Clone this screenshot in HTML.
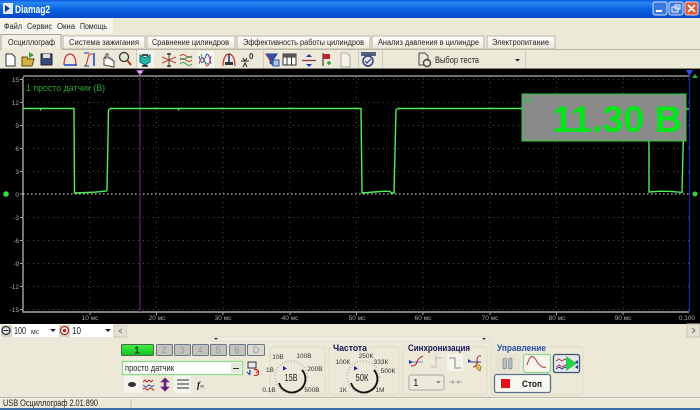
<!DOCTYPE html>
<html><head><meta charset="utf-8"><style>
html,body{margin:0;padding:0;width:700px;height:410px;overflow:hidden;background:#ece9d8}
svg{display:block;filter:blur(.35px)}
text{font-family:"Liberation Sans",sans-serif}
.t{font-size:8px;fill:#222}
.y{font-size:6.500px;fill:#aaa;text-anchor:end}
.x{font-size:6.500px;fill:#aaa;text-anchor:middle}
.k{font-size:6.500px;fill:#333;text-anchor:middle}
.b{font-size:9px;font-weight:bold}
.n{font-size:9px;fill:#999;text-anchor:middle}
</style></head><body>
<svg width="700" height="410" viewBox="0 0 700 410" xmlns="http://www.w3.org/2000/svg">
<defs>
<linearGradient id="tb" x1="0" y1="0" x2="0" y2="1"><stop offset="0" stop-color="#0a5ae0"/><stop offset=".15" stop-color="#2a86f0"/><stop offset=".5" stop-color="#0a62e4"/><stop offset="1" stop-color="#0448c8"/></linearGradient>
<linearGradient id="gr" x1="0" y1="0" x2="0" y2="1"><stop offset="0" stop-color="#44f044"/><stop offset="1" stop-color="#10c020"/></linearGradient>
<linearGradient id="tab" x1="0" y1="0" x2="0" y2="1"><stop offset="0" stop-color="#fff"/><stop offset="1" stop-color="#ebe8da"/></linearGradient>
</defs>
<rect width="700" height="410" fill="#ece9d8"/>
<!-- title bar -->
<rect width="700" height="18" fill="url(#tb)"/>
<rect x="3" y="3" width="10" height="11" fill="#dfe8f5"/><path d="M5 5l5 3.500-5 3.500z" fill="#123a8a"/>
<text x="15" y="13" font-size="11" font-weight="bold" fill="#fff" textLength="35" lengthAdjust="spacingAndGlyphs">Diamag2</text>
<rect x="653" y="2" width="14" height="13" rx="2" fill="#3c78e0" stroke="#cfe0f8"/><rect x="656" y="10" width="6" height="2" fill="#fff"/>
<rect x="669" y="2" width="14" height="13" rx="2" fill="#3c78e0" stroke="#cfe0f8"/><rect x="672" y="7" width="6" height="5" fill="none" stroke="#fff"/><rect x="675" y="5" width="5" height="4" fill="none" stroke="#fff"/>
<rect x="685" y="2" width="13" height="13" rx="2" fill="#e0583a" stroke="#f4d0c4"/><path d="M688 5l7 7M695 5l-7 7" stroke="#fff" stroke-width="1.600"/>
<!-- menu -->
<rect x="0" y="18" width="113" height="16" fill="#f4f3ec"/>
<text x="4" y="29" class="t" textLength="18" lengthAdjust="spacingAndGlyphs">Файл</text><text x="27" y="29" class="t" textLength="25" lengthAdjust="spacingAndGlyphs">Сервис</text><text x="57" y="29" class="t" textLength="18" lengthAdjust="spacingAndGlyphs">Окна</text><text x="80" y="29" class="t" textLength="27" lengthAdjust="spacingAndGlyphs">Помощь</text>
<!-- tabs -->
<g fill="url(#tab)" stroke="#b8b5a4">
<path d="M63 49V36h82v13z"/><path d="M147 49V36h88v13z"/><path d="M237 49V36h133v13z"/><path d="M372 49V36h112v13z"/><path d="M487 49V36h68v13z"/>
</g>
<path d="M0 49.500H700" stroke="#b8b5a4"/>
<path d="M1 50V34.500h60V50" fill="#f2f0e6" stroke="#aaa89a"/><rect x="2" y="48" width="59" height="3" fill="#ece9d8"/>
<text x="8" y="45" class="t" textLength="47" lengthAdjust="spacingAndGlyphs">Осциллограф</text>
<text x="69" y="45" class="t" textLength="70" lengthAdjust="spacingAndGlyphs">Система зажигания</text>
<text x="152" y="45" class="t" textLength="77" lengthAdjust="spacingAndGlyphs">Сравнение цилиндров</text>
<text x="243" y="45" class="t" textLength="121" lengthAdjust="spacingAndGlyphs">Эффективность работы цилиндров</text>
<text x="378" y="45" class="t" textLength="101" lengthAdjust="spacingAndGlyphs">Анализ давления в цилиндре</text>
<text x="492" y="45" class="t" textLength="57" lengthAdjust="spacingAndGlyphs">Электропитание</text>
<!-- toolbar -->
<path d="M6 54h6l3 3v9H6z" fill="#fff" stroke="#333"/>
<path d="M22 57h5l1 2h6l-2 7H22z" fill="#d8b040" stroke="#5a4a10"/><path d="M29 52l5 3-5 3z" fill="#30a030"/>
<rect x="41" y="54" width="11" height="11" fill="#3a4a7a" stroke="#222"/><rect x="43" y="54" width="7" height="4" fill="#ddd"/>
<path d="M64 65c0-6 2-11 6-11s6 5 6 11" fill="none" stroke="#d03030" stroke-width="1.300"/><path d="M64 65h13" stroke="#2040c0" stroke-width="1.500"/>
<path d="M85 65c3 0 2-10 5-11h3" fill="none" stroke="#d03030"/><path d="M94 53v13" stroke="#2040c0" stroke-width="1.500"/><path d="M84 53h5M84 66h5" stroke="#2040c0"/>
<path d="M104 65v-7l1-1 1 2v-5l2 0v4l2 0v1l2 0v1l2 1v6z" fill="#fff" stroke="#444"/>
<circle cx="124" cy="57" r="4.500" fill="#dfe8d0" stroke="#333" stroke-width="1.300"/><path d="M127 60l4 5" stroke="#a04020" stroke-width="2"/>
<path d="M136.500 50v18" stroke="#cfccbc"/><rect x="137" y="50" width="17" height="18" fill="#f4f3ec"/>
<path d="M140 55l5 3 5-3v7l-5 3-5-3z" fill="#20b8a8" stroke="#0a6a60"/><path d="M142 55h6M142 66h6" stroke="#111" stroke-width="1.400"/>
<path d="M162 57l7 3 7-3M162 63l7-3 7 3" stroke="#c04030" fill="none"/><path d="M169 53v14" stroke="#444"/><path d="M167 54h4M167 66h4" stroke="#222" stroke-width="1.300"/>
<path d="M180 56q3-3 6 0t6 0M180 60q3-3 6 0t6 0" stroke="#c04030" fill="none"/><path d="M180 64q3-3 6 0t6 0M180 58q3 3 6 0t6 0" stroke="#30a060" fill="none"/>
<rect x="197" y="51" width="17" height="17" fill="#f4f3ec"/>
<path d="M199 56q3 12 6 2t6 6" stroke="#3050c0" fill="none"/><path d="M199 64q3-12 6-2t6-6" stroke="#c04060" fill="none"/><path d="M201 54q3 10 8 10" stroke="#40a060" fill="none"/>
<path d="M223 66c0-6 2-12 6-12s6 6 6 12" fill="none" stroke="#c03030" stroke-width="1.200"/><path d="M229 54v8" stroke="#203080" stroke-width="1.500"/><rect x="225" y="62" width="8" height="3" fill="#333"/>
<path d="M241 61h8M243 58l2 3 2-3M243 67l2-4 2 4" stroke="#222" fill="none"/><text x="249" y="59" font-size="8" font-weight="bold" fill="#333">0</text>
<path d="M263.500 50v18" stroke="#cfccbc"/>
<path d="M266 54h11l-4 6v5l-3-2v-3z" fill="#3050b0" stroke="#2a3a8a"/><path d="M266 54l5 8" stroke="#c03040"/><rect x="273" y="60" width="6" height="6" fill="#b0c8e8" stroke="#3050a0"/>
<rect x="283" y="54" width="13" height="11" fill="#fff" stroke="#333"/><path d="M283 57h13M287 54v11M291.500 54v11" stroke="#333"/><rect x="283" y="54" width="13" height="3" fill="#555"/>
<path d="M302 60.500h14" stroke="#a03050" stroke-width="1.300"/><path d="M306 57l3-3 3 3zM306 64l3 3 3-3z" fill="#2040a0"/>
<path d="M323 53v13" stroke="#222"/><path d="M323 54h7v5h-7z" fill="#c02030"/><path d="M327 63h4M329 61v4" stroke="#20a030" stroke-width="1.400"/>
<path d="M341 53h6l3 3v11h-9z" fill="#f4f3ea" stroke="#aaa"/>
<path d="M358.500 50v18" stroke="#cfccbc"/>
<rect x="361" y="52" width="15" height="4" fill="#55607a"/><circle cx="368" cy="61" r="5" fill="#e4e4f0" stroke="#334080" stroke-width="1.500"/><path d="M365 61l2 2 4-4" stroke="#30407a" fill="none" stroke-width="1.200"/>
<path d="M382.500 50v18" stroke="#cfccbc"/>
<path d="M419 53h6l3 3v5M419 53v12h5" fill="none" stroke="#444"/><circle cx="427" cy="63" r="3.500" fill="none" stroke="#444" stroke-width="1.400"/>
<text x="435" y="63" class="t" style="font-size:9px" textLength="44" lengthAdjust="spacingAndGlyphs">Выбор теста</text>
<path d="M515 59h5l-2.500 2.500z" fill="#222"/>
<path d="M525.500 50v18" stroke="#cfccbc"/>
<!-- scope -->
<rect x="0" y="69" width="700" height="255" fill="#000"/>
<rect x="0" y="68" width="700" height="1" fill="#8a8878"/>
<path d="M23 77V312H689" fill="none" stroke="#a8a8a8" stroke-width="1.400"/>
<path d="M23 76H689" stroke="#b0b0b0" stroke-width="1.300"/>
<!-- grid -->
<g stroke="#4c4c4c" stroke-dasharray="1 4" stroke-width="1">
<path d="M23 79.500H689M23 102.500H689M23 125.500H689M23 148.500H689M23 171.500H689M23 217.500H689M23 240.500H689M23 263.500H689M23 286.500H689M23 309.500H689"/>
<path d="M90 77V312M156.500 77V312M223 77V312M290 77V312M356.500 77V312M423 77V312M490 77V312M556.500 77V312M623 77V312"/>
</g>
<path d="M23 194H689" stroke="#eee" stroke-dasharray="1.500 2.500"/>
<!-- tick marks -->
<g stroke="#aaa"><path d="M20 79.500h3M20 102.500h3M20 125.500h3M20 148.500h3M20 171.500h3M20 194h3M20 217.500h3M20 240.500h3M20 263.500h3M20 286.500h3M20 309.500h3"/><path d="M90 312v3M156.500 312v3M223 312v3M290 312v3M356.500 312v3M423 312v3M490 312v3M556.500 312v3M623 312v3"/></g>
<g>
<text x="19" y="82" class="y">15</text><text x="19" y="105" class="y">12</text><text x="19" y="128" class="y">9</text><text x="19" y="151" class="y">6</text><text x="19" y="174" class="y">3</text><text x="19" y="197" class="y">0</text><text x="19" y="220" class="y">-3</text><text x="19" y="243" class="y">-6</text><text x="19" y="266" class="y">-9</text><text x="19" y="289" class="y">-12</text><text x="19" y="312" class="y">-15</text>
<text x="90" y="320" class="x">10 мс</text><text x="157" y="320" class="x">20 мс</text><text x="223" y="320" class="x">30 мс</text><text x="290" y="320" class="x">40 мс</text><text x="357" y="320" class="x">50 мс</text><text x="423" y="320" class="x">60 мс</text><text x="490" y="320" class="x">70 мс</text><text x="557" y="320" class="x">80 мс</text><text x="623" y="320" class="x">90 мс</text><text x="687" y="320" class="x">0.100</text>
</g>
<!-- cursors -->
<path d="M140 76V312" stroke="#5a2a5e" stroke-width="1.200"/>
<path d="M136 70h8l-4 6z" fill="#b050c0"/><rect x="138" y="71" width="4" height="2" fill="#e0b0f0"/>
<path d="M689.500 76V312" stroke="#1a2a98" stroke-width="1.300"/>
<path d="M686 70h7l-3.500 6z" fill="#3050e0"/>
<path d="M692 78l3-4 3 4z" fill="#20b040"/>
<circle cx="6" cy="194" r="2.800" fill="#30e040"/><circle cx="695" cy="194" r="2.500" fill="#30d040"/>
<!-- trace -->
<path d="M23 108.500H40l.5 1 .5-1H74L74.500 193l20-.8 12-1.200L107 190 108.500 110l2-1.500H178l.5 1 .5-1H361L362 193l12-1 10-.8 6 .2 1 1.600H394L396 110l2-1.500H649V192l12-.8 10 .2 11 1L684 109h5" fill="none" stroke="#50ee58" stroke-width="1.400"/>
<text x="26" y="91" font-size="9" fill="#2aa830" textLength="79" lengthAdjust="spacingAndGlyphs">1 просто датчик (В)</text>
<!-- measurement box -->
<rect x="522" y="94" width="164" height="47" fill="#8a8a8a" stroke="#20d030"/>
<text x="524" y="103" font-size="7" fill="#30c040">M1</text>
<text x="552" y="132" font-size="37" font-weight="bold" fill="#00e81a" textLength="130" lengthAdjust="spacingAndGlyphs">11.30 В</text>
<!-- range row -->
<rect x="0" y="324" width="127" height="13" fill="#fff"/>
<rect x="114" y="325" width="13" height="12" fill="#e4e1d0" stroke="#c8c5b4"/><path d="M122 329l-3 2 3 2" stroke="#777" fill="none"/>
<rect x="1" y="325" width="11" height="12" fill="#d8d5c4"/><circle cx="6" cy="330.500" r="4" fill="#dde" stroke="#333" stroke-width="1.300"/><path d="M3.500 330.500h5" stroke="#222"/>
<text x="14" y="334" font-size="10" fill="#222" textLength="12" lengthAdjust="spacingAndGlyphs">100</text><text x="31" y="334" font-size="7" fill="#333">мс</text>
<path d="M50 329h6l-3 3z" fill="#222"/>
<rect x="59" y="325" width="11" height="12" fill="#d8d5c4"/><circle cx="64.500" cy="330.500" r="4" fill="#fff" stroke="#a03030" stroke-width="1.300"/><circle cx="64.500" cy="330.500" r="1.800" fill="#c02020"/>
<text x="72" y="334" font-size="10" fill="#222" textLength="9" lengthAdjust="spacingAndGlyphs">10</text>
<path d="M105 329h6l-3 3z" fill="#222"/>
<rect x="127" y="324" width="573" height="13" fill="#ece9d8"/>
<rect x="211" y="337" width="279" height="4" fill="#f2f0e6" stroke="#d0cdbc" stroke-dasharray="1 1"/><path d="M214 338h4l-2 2z" fill="#333"/><path d="M482 338h4l-2 2z" fill="#333"/>
<rect x="687" y="324" width="13" height="13" fill="#e4e1d0" stroke="#c8c5b4"/><path d="M692 328l3 2.500-3 2.500" stroke="#777" fill="none"/>
<!-- channel buttons -->
<rect x="121.500" y="344.500" width="32" height="11" rx="1" fill="url(#gr)" stroke="#4a6a4a"/><text x="137" y="353.500" font-size="10" font-weight="bold" fill="#063a10" text-anchor="middle">1</text>
<g fill="#c4c2bc" stroke="#6a7a8a"><rect x="156.500" y="344.500" width="16" height="11" rx="1"/><rect x="174.500" y="344.500" width="16" height="11" rx="1"/><rect x="192.500" y="344.500" width="16" height="11" rx="1"/><rect x="210.500" y="344.500" width="16" height="11" rx="1"/><rect x="229.500" y="344.500" width="16" height="11" rx="1"/></g>
<rect x="247.500" y="344.500" width="17" height="11" rx="1" fill="#dcdad0" stroke="#6a7a8a"/>
<text x="164" y="353" class="n">2</text><text x="182" y="353" class="n">3</text><text x="200" y="353" class="n">4</text><text x="218" y="353" class="n">5</text><text x="237" y="353" class="n">6</text><text x="256" y="353" class="n">D</text>
<!-- name input -->
<rect x="122.500" y="361.500" width="120" height="13" fill="#fff" stroke="#8cd88c" stroke-width="1.300"/>
<text x="125" y="371" font-size="9" fill="#222" textLength="49" lengthAdjust="spacingAndGlyphs">просто датчик</text>
<rect x="231" y="363" width="10" height="10" fill="#e8e5d8"/><path d="M233 368.500h6" stroke="#333"/>
<rect x="248" y="362" width="8" height="6" fill="#e8e8f0" stroke="#333"/><path d="M247 372l3 3M250 370v4" stroke="#2040a0" fill="none" stroke-width="1.200"/><path d="M254 370a3 3 0 1 1 0 5M258 371l-2 2" stroke="#d02020" fill="none" stroke-width="1.200"/>
<!-- sub tabs -->
<rect x="124" y="376" width="18" height="17" fill="#f4f3ec"/><rect x="174" y="376" width="17" height="17" fill="#f4f3ec"/>
<ellipse cx="132" cy="384.500" rx="4" ry="2.500" fill="#333"/>
<path d="M143 382l2-2 2 2 2-2 2 2 2-2M143 389q2-2 3 0t3 0 3 0 2 0" stroke="#b03030" fill="none"/><path d="M143 385l3 2 3-2 3 2 2-2" stroke="#5050b0" fill="none"/>
<path d="M165 378l-4 4h3v5h-3l4 4 4-4h-3v-5h3z" fill="#2a30a8" stroke="#a02060" stroke-width=".8"/>
<path d="M177 380h12M177 384h12M177 388h12" stroke="#555" stroke-width="1.200"/>
<text x="197" y="388" font-size="9" font-weight="bold" font-style="italic" fill="#111" style="font-family:'Liberation Serif',serif">f<tspan font-size="6">∞</tspan></text>
<!-- panels -->
<g fill="none" stroke="#dedbc8">
<rect x="270" y="347" width="55" height="48" rx="3"/>
<rect x="329" y="347" width="70" height="48" rx="3"/>
<rect x="403" y="347" width="84" height="48" rx="3"/>
<rect x="491" y="347" width="92" height="48" rx="3"/>
</g>
<rect x="331" y="343" width="38" height="9" fill="#ece9d8"/>
<rect x="406" y="343" width="66" height="9" fill="#ece9d8"/>
<rect x="495" y="343" width="52" height="9" fill="#ece9d8"/>
<text x="333" y="351" class="b" fill="#14145e" textLength="34" lengthAdjust="spacingAndGlyphs">Частота</text>
<text x="408" y="351" class="b" fill="#14145e" textLength="62" lengthAdjust="spacingAndGlyphs">Синхронизация</text>
<text x="497" y="351" class="b" fill="#2850b0" textLength="49" lengthAdjust="spacingAndGlyphs">Управление</text>
<!-- knob 1 -->
<circle cx="291" cy="377" r="16" fill="none" stroke="#bbb" stroke-width="2" stroke-dasharray="1 2"/>
<path d="M279 383A13.500 13.500 0 1 0 302 370" fill="none" stroke="#111" stroke-width="1.800"/>
<path d="M283 366l4 2.500-4 2z" fill="#2020b0"/>
<text x="291" y="381" font-size="10" fill="#222" text-anchor="middle" textLength="13" lengthAdjust="spacingAndGlyphs">15В</text>
<text x="278" y="359" class="k">10В</text><text x="304" y="358" class="k">100В</text><text x="315" y="371" class="k">200В</text><text x="270" y="372" class="k">1В</text><text x="269" y="392" class="k">0.1В</text><text x="312" y="392" class="k">500В</text>
<!-- knob 2 -->
<circle cx="363" cy="377" r="16" fill="none" stroke="#bbb" stroke-width="2" stroke-dasharray="1 2"/>
<path d="M351 383A13.500 13.500 0 1 0 374 370" fill="none" stroke="#111" stroke-width="1.800"/>
<path d="M354 366l4 2.500-4 2z" fill="#2020b0"/>
<text x="362" y="381" font-size="10" fill="#222" text-anchor="middle" textLength="13" lengthAdjust="spacingAndGlyphs">50К</text>
<text x="366" y="358" class="k">250К</text><text x="343" y="364" class="k">100К</text><text x="381" y="364" class="k">333К</text><text x="388" y="373" class="k">500К</text><text x="343" y="392" class="k">1К</text><text x="380" y="392" class="k">1М</text>
<!-- sync -->
<path d="M411 366q5 0 6-4t6-6" stroke="#c02040" fill="none" stroke-width="1.200"/><path d="M409 360l4 2-4 2z" fill="#2030a0"/><path d="M409 362h14" stroke="#2040a0" opacity=".6"/>
<path d="M431 367h5v-9h6M436 355v4" stroke="#bbb" fill="none"/>
<rect x="447" y="354" width="16" height="17" fill="#f4f3ec"/><path d="M449 358h6v10h6M455 361v4" stroke="#888" fill="none"/>
<path d="M470 362h11" stroke="#2040a0"/><path d="M468 359l3 2-3 2z" fill="#2030a0"/><path d="M473 367q4 0 4-6t4-5" stroke="#c02040" fill="none"/><path d="M476 362l5 5-1 4-3-2z" fill="#e8c050" stroke="#806010" stroke-width=".6"/>
<rect x="409" y="375" width="35" height="15" rx="2" fill="#eceadc" stroke="#aaa89a"/><text x="413" y="386" font-size="10" fill="#222">1</text><path d="M436 381h5l-2.500 2.500z" fill="#888"/>
<path d="M449 382h5M462 382h-5" stroke="#aaa"/><path d="M452 380l3 2-3 2zM459 380l-3 2 3 2z" fill="#aaa"/>
<!-- control -->
<rect x="495" y="354" width="25" height="18" rx="2" fill="#e6e3d4"/>
<rect x="503" y="358" width="3.500" height="11" rx="1.500" fill="#b8bcc4" stroke="#777" stroke-width=".6"/><rect x="508.500" y="358" width="3.500" height="11" rx="1.500" fill="#b8bcc4" stroke="#777" stroke-width=".6"/>
<rect x="523.500" y="354.500" width="27" height="18" rx="2" fill="#f6f5ee" stroke="#90d890" stroke-width="1.200"/>
<path d="M527 365q4-14 9-5t10 7" stroke="#b85050" fill="none" stroke-width="1.200"/>
<rect x="553.500" y="354.500" width="26" height="18" rx="2" fill="#e8e8f0" stroke="#445070" stroke-width="1.300"/>
<path d="M556 361l3-2 3 2 3-2 3 2M556 367l3-2 3 2 3-2 3 2" stroke="#b04040" fill="none"/><path d="M556 369l3-2 3 2 3-2 3 2" stroke="#3040a0" fill="none"/>
<path d="M566 356l11 7.500-11 7.500z" fill="#28d048"/>
<path d="M578 360l-3 2 3 2M578 365l-3 2 3 2" fill="#203080"/>
<rect x="494.500" y="374.500" width="56" height="18" rx="2" fill="#f8f7f0" stroke="#5a7088" stroke-width="1.300"/>
<rect x="501" y="379" width="9" height="9" fill="#e01018"/>
<text x="522" y="387" font-size="9" font-weight="bold" fill="#111" textLength="20" lengthAdjust="spacingAndGlyphs">Стоп</text>
<!-- status bar -->
<path d="M0 397.500H700" stroke="#bdbaa8"/><path d="M0 398.500H700" stroke="#f6f5ec"/>
<text x="3" y="406" font-size="9" fill="#222" textLength="95" lengthAdjust="spacingAndGlyphs">USB Осциллограф  2.01.890</text>
<path d="M131 399v9" stroke="#c0bdac"/>
<rect x="0" y="408" width="700" height="2" fill="#3a6ea8"/>
</svg>
</body></html>
